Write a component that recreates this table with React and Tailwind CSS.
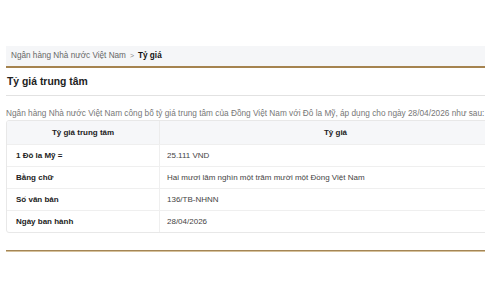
const rows = [
  { label: "1 Đô la Mỹ =", value: "25.111 VND" },
  { label: "Bằng chữ", value: "Hai mươi lăm nghìn một trăm mười một Đồng Việt Nam" },
  { label: "Số văn bản", value: "136/TB-NHNN" },
  { label: "Ngày ban hành", value: "28/04/2026" },
];

export default function App() {
  return (
    <div className="h-[303px] w-[485px] overflow-hidden bg-white font-['Liberation_Sans',Arial,sans-serif]">
      <div className="w-[512px] pl-[6px] pt-[46px]">
        {/* Breadcrumb */}
        <div className="flex h-[22px] items-center border-b-2 border-[#a5834f] bg-[#f5f6f8] px-[5px] text-[8.2px] text-[#666]">
          <span>Ngân hàng Nhà nước Việt Nam</span>
          <span className="mx-[4px] text-[7px] text-[#888]">&gt;</span>
          <span className="font-bold text-[#111]">Tỷ giá</span>
        </div>

        {/* Title */}
        <div className="flex h-[28px] items-center border-b border-[#e2e2e2] pl-px text-[10.4px] font-bold text-[#222]">
          Tỷ giá trung tâm
        </div>

        {/* Description */}
        <p className="mt-[13px] whitespace-nowrap text-[8.27px] leading-[10px] text-[#777]">
          Ngân hàng Nhà nước Việt Nam công bố tỷ giá trung tâm của Đồng Việt Nam với Đô la Mỹ, áp dụng cho ngày 28/04/2026 như sau:
        </p>

        {/* Table */}
        <div className="mt-[1px] overflow-hidden rounded-[3px] border border-[#e8e8e8] text-[8px] text-[#333]">
          <div className="grid grid-cols-[153px_1fr] bg-[#f6f7f9] font-bold text-[#222]">
            <div className="flex h-[23px] items-center justify-center border-r border-[#ececec]">Tỷ giá trung tâm</div>
            <div className="flex h-[23px] items-center justify-center">Tỷ giá</div>
          </div>
          {rows.map((r) => (
            <div key={r.label} className="grid grid-cols-[153px_1fr] border-t border-[#efefef]">
              <div className="flex h-[21px] items-center border-r border-[#efefef] pl-[9px] font-bold text-[#222]">{r.label}</div>
              <div className="flex h-[21px] items-center pl-[7px] text-[#444]">{r.value}</div>
            </div>
          ))}
        </div>

        {/* Bottom rule */}
        <div className="mt-[17px] h-px bg-[#a48656]" />
        <div className="h-px bg-[#d6c19c]" />
      </div>
    </div>
  );
}
